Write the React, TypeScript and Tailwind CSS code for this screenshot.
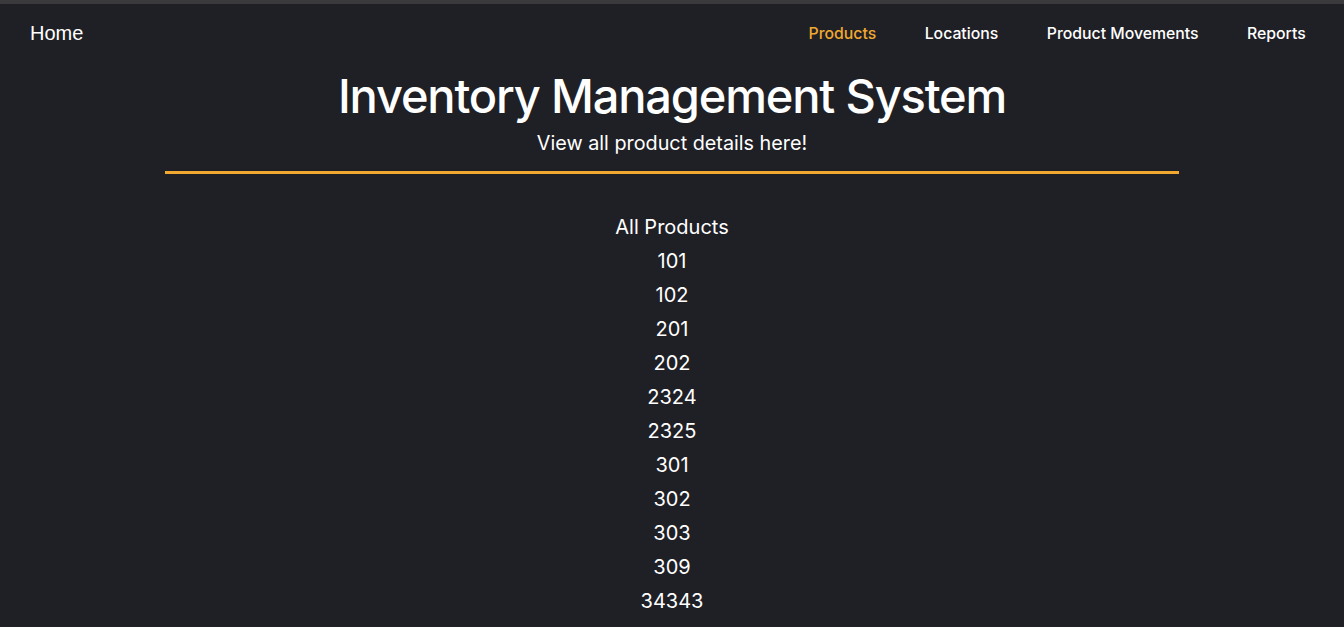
import { useState } from "react";

const products = ["101", "102", "201", "202", "2324", "2325", "301", "302", "303", "309", "34343"];

const links = ["Products", "Locations", "Product Movements", "Reports"];

export default function App() {
  const [active] = useState("Products");

  return (
    <div className="min-h-screen bg-[#1f2026] text-white border-t-4 border-[#3a3a3c] font-['Inter',sans-serif]">
      {/* Navbar */}
      <nav className="h-[58px] flex items-center justify-between pl-[30px] pr-[14px]">
        <a className="text-[20px] font-['Liberation_Sans',Arial,sans-serif] text-white">Home</a>
        <ul className="flex items-center">
          {links.map((l) => (
            <li key={l}>
              <a
                className={`px-[24.25px] text-[15.8px] font-medium ${
                  active === l ? "text-[#f0a830]" : "text-white"
                }`}
              >
                {l}
              </a>
            </li>
          ))}
        </ul>
      </nav>

      {/* Header */}
      <header className="flex flex-col items-center">
        <h1 className="text-[47px] leading-[56px] font-medium tracking-tight mt-[6px]">
          Inventory Management System
        </h1>
        <p className="text-[19.8px] leading-[28px] mt-[5px]">View all product details here!</p>
        <div className="w-[1014px] h-[3px] bg-[#f0a830] mt-[14px]" />
      </header>

      {/* Product list */}
      <section className="flex flex-col items-center mt-[36px] pb-6">
        <h2 className="text-[20px] leading-[34px]">All Products</h2>
        <ul className="flex flex-col items-center">
          {products.map((p) => (
            <li key={p} className="text-[20px] leading-[34px]">
              {p}
            </li>
          ))}
        </ul>
      </section>
    </div>
  );
}
